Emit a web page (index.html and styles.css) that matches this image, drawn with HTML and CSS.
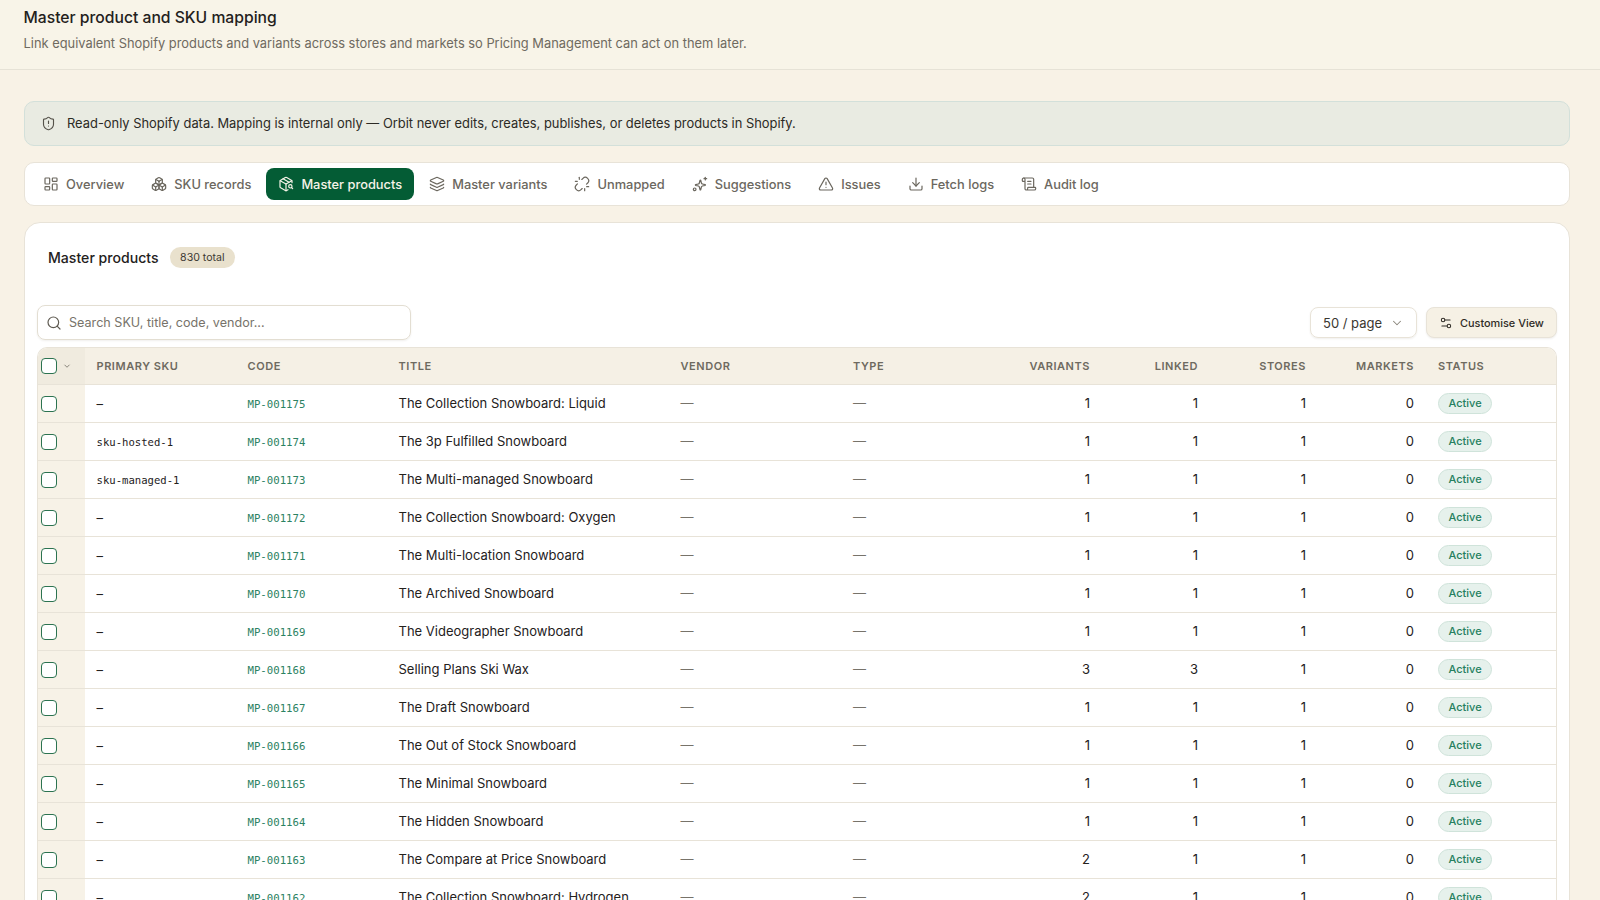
FILE: index.html
```html
<!DOCTYPE html>
<html lang="en">
<head>
  <meta charset="UTF-8"/>
  <meta name="viewport" content="width=device-width, initial-scale=1.0"/>
  <title>Master product and SKU mapping</title>
  <link rel="stylesheet" href="styles.css">
</head>
<body>
  <div class="page">
    <header class="page-header">
      <h1>Master product and SKU mapping</h1>
      <p>Link equivalent Shopify products and variants across stores and markets so Pricing Management can act on them later.</p>
    </header>

    <main class="content">
      <div class="notice">
        <svg class="icon" viewBox="0 0 24 24"><path d="M20 13c0 5-3.5 7.5-7.66 8.95a1 1 0 0 1-.67-.01C7.5 20.5 4 18 4 13V6a1 1 0 0 1 1-1c2 0 4.5-1.2 6.24-2.72a1.17 1.17 0 0 1 1.52 0C14.51 3.81 17 5 19 5a1 1 0 0 1 1 1z"/><path d="M12 8v4"/><path d="M12 16h.01"/></svg>
        <span>Read-only Shopify data. Mapping is internal only — Orbit never edits, creates, publishes, or deletes products in Shopify.</span>
      </div>

      <nav class="tabs">
        <a class="tab"><svg class="icon" viewBox="0 0 24 24"><rect x="3" y="3" width="7" height="9" rx="1"/><rect x="14" y="3" width="7" height="5" rx="1"/><rect x="14" y="12" width="7" height="9" rx="1"/><rect x="3" y="16" width="7" height="5" rx="1"/></svg>Overview</a>
        <a class="tab"><svg class="icon" viewBox="0 0 24 24"><path d="M2.97 12.92A2 2 0 0 0 2 14.63v3.24a2 2 0 0 0 .97 1.71l3 1.8a2 2 0 0 0 2.06 0L12 19v-5.5l-5-3-4.03 2.42Z"/><path d="m7 16.5-4.74-2.85"/><path d="m7 16.5 5-3"/><path d="M7 16.5v5.17"/><path d="M12 13.5V19l3.97 2.38a2 2 0 0 0 2.06 0l3-1.8a2 2 0 0 0 .97-1.71v-3.24a2 2 0 0 0-.97-1.71L17 10.5l-5 3Z"/><path d="m17 16.5-5-3"/><path d="m17 16.5 4.74-2.85"/><path d="M17 16.5v5.17"/><path d="M7.97 4.42A2 2 0 0 0 7 6.13v4.37l5 3 5-3V6.13a2 2 0 0 0-.97-1.71l-3-1.8a2 2 0 0 0-2.06 0l-3 1.8Z"/><path d="M12 8 7.26 5.15"/><path d="m12 8 4.74-2.85"/><path d="M12 13.5V8"/></svg>SKU records</a>
        <a class="tab active"><svg class="icon" viewBox="0 0 24 24"><path d="M21 10V8a2 2 0 0 0-1-1.73l-7-4a2 2 0 0 0-2 0l-7 4A2 2 0 0 0 3 8v8a2 2 0 0 0 1 1.73l7 4a2 2 0 0 0 2 0l2-1.14"/><path d="m7.5 4.27 9 5.15"/><path d="M3.29 7 12 12l8.71-5"/><path d="M12 22V12"/><circle cx="18.5" cy="15.5" r="2.5"/><path d="M20.27 17.27 22 19"/></svg>Master products</a>
        <a class="tab"><svg class="icon" viewBox="0 0 24 24"><path d="M12.83 2.18a2 2 0 0 0-1.66 0L2.6 6.08a1 1 0 0 0 0 1.83l8.58 3.91a2 2 0 0 0 1.66 0l8.58-3.9a1 1 0 0 0 0-1.83z"/><path d="M2 12a1 1 0 0 0 .58.91l8.6 3.91a2 2 0 0 0 1.65 0l8.58-3.9A1 1 0 0 0 22 12"/><path d="M2 17a1 1 0 0 0 .58.91l8.6 3.91a2 2 0 0 0 1.65 0l8.58-3.9A1 1 0 0 0 22 17"/></svg>Master variants</a>
        <a class="tab"><svg class="icon" viewBox="0 0 24 24"><path d="m18.84 12.25 1.72-1.71h-.02a5 5 0 0 0-.12-7.07 5 5 0 0 0-6.95 0l-1.72 1.71"/><path d="m5.17 11.75-1.71 1.71a5 5 0 0 0 .12 7.07 5 5 0 0 0 6.95 0l1.71-1.71"/><path d="M8 2v3"/><path d="M2 8h3"/><path d="M16 19v3"/><path d="M19 16h3"/></svg>Unmapped</a>
        <a class="tab"><svg class="icon" viewBox="0 0 24 24"><path d="M11.02 16.5A2 2 0 0 0 9.58 15.06l-4.14-1.07a.5.5 0 0 1 0-.96l4.14-1.07A2 2 0 0 0 11.02 10.5l1.07-4.14a.5.5 0 0 1 .96 0l1.07 4.14a2 2 0 0 0 1.44 1.44l4.14 1.07a.5.5 0 0 1 0 .96l-4.14 1.07a2 2 0 0 0-1.44 1.44l-1.07 4.14a.5.5 0 0 1-.96 0z"/><path d="M20 2v4"/><path d="M22 4h-4"/><circle cx="4" cy="20" r="2"/></svg>Suggestions</a>
        <a class="tab"><svg class="icon" viewBox="0 0 24 24"><path d="m21.73 18-8-14a2 2 0 0 0-3.48 0l-8 14A2 2 0 0 0 4 21h16a2 2 0 0 0 1.73-3"/><path d="M12 9v4"/><path d="M12 17h.01"/></svg>Issues</a>
        <a class="tab"><svg class="icon" viewBox="0 0 24 24"><path d="M12 15V3"/><path d="M21 15v4a2 2 0 0 1-2 2H5a2 2 0 0 1-2-2v-4"/><path d="m7 10 5 5 5-5"/></svg>Fetch logs</a>
        <a class="tab"><svg class="icon" viewBox="0 0 24 24"><path d="M15 12h-5"/><path d="M15 8h-5"/><path d="M19 17V5a2 2 0 0 0-2-2H4"/><path d="M8 21h12a2 2 0 0 0 2-2v-1a1 1 0 0 0-1-1H11a1 1 0 0 0-1 1v1a2 2 0 1 1-4 0V5a2 2 0 1 0-4 0v2a1 1 0 0 0 1 1h3"/></svg>Audit log</a>
      </nav>

      <section class="card">
        <div class="card-title">
          <h2>Master products</h2>
          <span class="count">830 total</span>
        </div>

        <div class="toolbar">
          <label class="search">
            <svg class="icon" viewBox="0 0 24 24"><circle cx="11" cy="11" r="8"/><path d="m21 21-4.34-4.34"/></svg>
            <span>Search SKU, title, code, vendor...</span>
          </label>
          <div class="toolbar-right">
            <div class="select">50 / page <svg class="icon" viewBox="0 0 24 24"><path d="m6 9 6 6 6-6"/></svg></div>
            <button class="btn"><svg class="icon" viewBox="0 0 24 24"><path d="M14 17H5"/><path d="M19 7h-9"/><circle cx="17" cy="17" r="3"/><circle cx="7" cy="7" r="3"/></svg>Customise View</button>
          </div>
        </div>

        <div class="table-wrap">
          <table>
            <colgroup>
              <col class="c-check"><col class="c-sku"><col class="c-code"><col class="c-title"><col class="c-vendor"><col class="c-type"><col class="c-num"><col class="c-num"><col class="c-num"><col class="c-num"><col>
            </colgroup>
            <thead>
              <tr>
                <th class="check"><span class="box"></span><svg class="caret" viewBox="0 0 24 24"><path d="m6 9 6 6 6-6"/></svg></th>
                <th>Primary SKU</th><th>Code</th><th>Title</th><th>Vendor</th><th>Type</th>
                <th class="num">Variants</th><th class="num">Linked</th><th class="num">Stores</th><th class="num">Markets</th><th>Status</th>
              </tr>
            </thead>
            <tbody id="rows"></tbody>
          </table>
        </div>
      </section>
    </main>
  </div>

  <script>
    (function () {
      const data = [
        ['–', 'MP-001175', 'The Collection Snowboard: Liquid', 1, 1],
        ['sku-hosted-1', 'MP-001174', 'The 3p Fulfilled Snowboard', 1, 1],
        ['sku-managed-1', 'MP-001173', 'The Multi-managed Snowboard', 1, 1],
        ['–', 'MP-001172', 'The Collection Snowboard: Oxygen', 1, 1],
        ['–', 'MP-001171', 'The Multi-location Snowboard', 1, 1],
        ['–', 'MP-001170', 'The Archived Snowboard', 1, 1],
        ['–', 'MP-001169', 'The Videographer Snowboard', 1, 1],
        ['–', 'MP-001168', 'Selling Plans Ski Wax', 3, 3],
        ['–', 'MP-001167', 'The Draft Snowboard', 1, 1],
        ['–', 'MP-001166', 'The Out of Stock Snowboard', 1, 1],
        ['–', 'MP-001165', 'The Minimal Snowboard', 1, 1],
        ['–', 'MP-001164', 'The Hidden Snowboard', 1, 1],
        ['–', 'MP-001163', 'The Compare at Price Snowboard', 2, 1],
        ['–', 'MP-001162', 'The Collection Snowboard: Hydrogen', 2, 1]
      ];
      const body = document.getElementById('rows');
      body.innerHTML = data.map(r => `
        <tr>
          <td class="check"><span class="box"></span></td>
          <td class="${r[0] === '–' ? 'plain' : 'mono'}">${r[0]}</td>
          <td class="code">${r[1]}</td>
          <td>${r[2]}</td>
          <td class="dash">—</td>
          <td class="dash">—</td>
          <td class="num">${r[3]}</td>
          <td class="num">${r[4]}</td>
          <td class="num">1</td>
          <td class="num">0</td>
          <td class="plain"><span class="status">Active</span></td>
        </tr>`).join('');
    })();
  </script>
</body>
</html>
```

FILE: styles.css
```css
html, body {
  margin: 0;
  padding: 0;
  height: 100%;
  overflow: hidden;
  background-color: #f8f2e6;
  font-family: "Inter", sans-serif;
  color: #24211c;
}

.page {
  height: 100vh;
  overflow: hidden;
}

.icon {
  width: 16px;
  height: 16px;
  flex: none;
  fill: none;
  stroke: currentColor;
  stroke-width: 1.8;
  stroke-linecap: round;
  stroke-linejoin: round;
}

.page-header {
  height: 70px;
  box-sizing: border-box;
  padding: 8px 24px 0 23.5px;
  background-color: #f8f4e8;
  border-bottom: 1px solid #e6e2d6;
}

.page-header h1 {
  margin: 0;
  font-size: 15.7px;
  line-height: 20px;
  font-weight: 500;
}

.page-header p {
  margin: 7px 0 0;
  font-size: 12.87px;
  line-height: 18px;
  color: #6f6a60;
}

.content {
  padding: 31px 30px 0 24px;
}

.notice {
  display: flex;
  align-items: center;
  gap: 11px;
  height: 45px;
  box-sizing: border-box;
  padding: 0 16px;
  background-color: #e9ebe2;
  border: 1px solid #d3e0da;
  border-radius: 10px;
  font-size: 12.9px;
  color: #2c2a25;
}

.notice .icon {
  width: 15px;
  height: 15px;
  color: #55524a;
}

.tabs {
  display: flex;
  align-items: center;
  gap: 3px;
  height: 44px;
  box-sizing: border-box;
  margin-top: 16px;
  padding: 0 6px;
  background-color: #fff;
  border: 1px solid #e8e3d8;
  border-radius: 10px;
}

.tab {
  display: flex;
  align-items: center;
  gap: 7px;
  height: 32px;
  padding: 0 12px;
  border-radius: 8px;
  font-size: 12.85px;
  font-weight: 500;
  color: #6b675e;
}

.tab.active {
  background-color: #045c35;
  color: #f6f3e8;
}

.card {
  margin-top: 16px;
  padding: 0 12px;
  height: 800px;
  background-color: #fff;
  border: 1px solid #e8e3d8;
  border-radius: 16px;
}

.card-title {
  display: flex;
  align-items: center;
  gap: 11px;
  height: 69px;
  padding-left: 11px;
}

.card-title h2 {
  margin: 0;
  font-size: 14.1px;
  font-weight: 500;
}

.count {
  padding: 0 10.5px;
  height: 21px;
  line-height: 21px;
  border-radius: 11px;
  background-color: #e9e1cd;
  font-size: 10.6px;
  color: #3d3a33;
}

.toolbar {
  display: flex;
  align-items: center;
  justify-content: space-between;
  margin-top: 13px;
}

.search {
  display: flex;
  align-items: center;
  gap: 7px;
  width: 374px;
  height: 35px;
  box-sizing: border-box;
  padding: 0 8px;
  border: 1px solid #e3ded2;
  border-radius: 8px;
  box-shadow: 0 1px 2px rgba(60, 50, 30, 0.08);
  font-size: 12.6px;
  color: #77736a;
}

.search .icon {
  color: #5f5b52;
}

.toolbar-right {
  display: flex;
  align-items: center;
  gap: 9px;
}

.select {
  display: flex;
  align-items: center;
  justify-content: space-between;
  width: 107px;
  height: 31px;
  box-sizing: border-box;
  padding: 0 12px;
  border: 1px solid #e8e3d8;
  border-radius: 8px;
  box-shadow: 0 1px 2px rgba(60, 50, 30, 0.08);
  font-size: 13px;
  color: #3a372f;
}

.select .icon {
  width: 14px;
  height: 14px;
  color: #8a867c;
}

.btn {
  display: flex;
  align-items: center;
  gap: 7px;
  width: 131px;
  height: 31px;
  box-sizing: border-box;
  padding: 0 12px;
  background-color: #f6f1e5;
  border: 1px solid #e8e3d8;
  border-radius: 8px;
  box-shadow: 0 1px 2px rgba(60, 50, 30, 0.08);
  font-family: inherit;
  font-size: 10.9px;
  font-weight: 500;
  white-space: nowrap;
  color: #2f2c26;
}

.btn .icon {
  width: 14px;
  height: 14px;
}

.table-wrap {
  margin-top: 7px;
  border: 1px solid #e8e3d8;
  border-bottom: 0;
  border-radius: 10px 10px 0 0;
  overflow: hidden;
}

table {
  width: 100%;
  table-layout: fixed;
  border-collapse: collapse;
  font-size: 13px;
}

.c-check { width: 46.5px; }
.c-sku { width: 151px; }
.c-code { width: 151px; }
.c-title { width: 282px; }
.c-vendor { width: 172.5px; }
.c-type { width: 153px; }
.c-num { width: 108px; }

th {
  height: 36px;
  padding: 0 12px;
  background-color: #f5f0e5;
  border-bottom: 1px solid #e8e3d8;
  text-align: left;
  font-size: 11px;
  font-weight: 600;
  letter-spacing: 0.55px;
  text-transform: uppercase;
  color: #6e6a60;
}

td {
  height: 36px;
  padding: 0 12px 1px;
  border-bottom: 1px solid #e8e3d8;
  color: #24211c;
}

th.num, td.num {
  text-align: right;
}

td.plain, td.mono {
  padding-bottom: 0;
  height: 37px;
}

.check {
  padding: 0 0 0 3px;
  background-color: #f7f2e7;
}

td.check {
  height: 37px;
  padding-bottom: 0;
}

th.check {
  background-color: #f0ebdf;
}

.box {
  display: inline-block;
  width: 14px;
  height: 14px;
  vertical-align: middle;
  background-color: #fff;
  border: 1px solid #2c7350;
  border-radius: 4px;
}

.caret {
  width: 10px;
  height: 10px;
  margin-left: 5px;
  vertical-align: middle;
  fill: none;
  stroke: #8a867c;
  stroke-width: 2.4;
}

.mono {
  font-family: "DejaVu Sans Mono", monospace;
  font-size: 10.6px;
}

td.code {
  padding: 1px 12px 0;
  font-family: "DejaVu Sans Mono", monospace;
  font-size: 10.7px;
  color: #2b8262;
}

td.dash {
  color: #77736a;
}

.status {
  display: inline-block;
  height: 19px;
  line-height: 19px;
  padding: 0 9.5px;
  background-color: #e6f1ec;
  border: 1px solid #cfe3da;
  border-radius: 11px;
  font-size: 11px;
  font-weight: 500;
  color: #25805f;
}
```
